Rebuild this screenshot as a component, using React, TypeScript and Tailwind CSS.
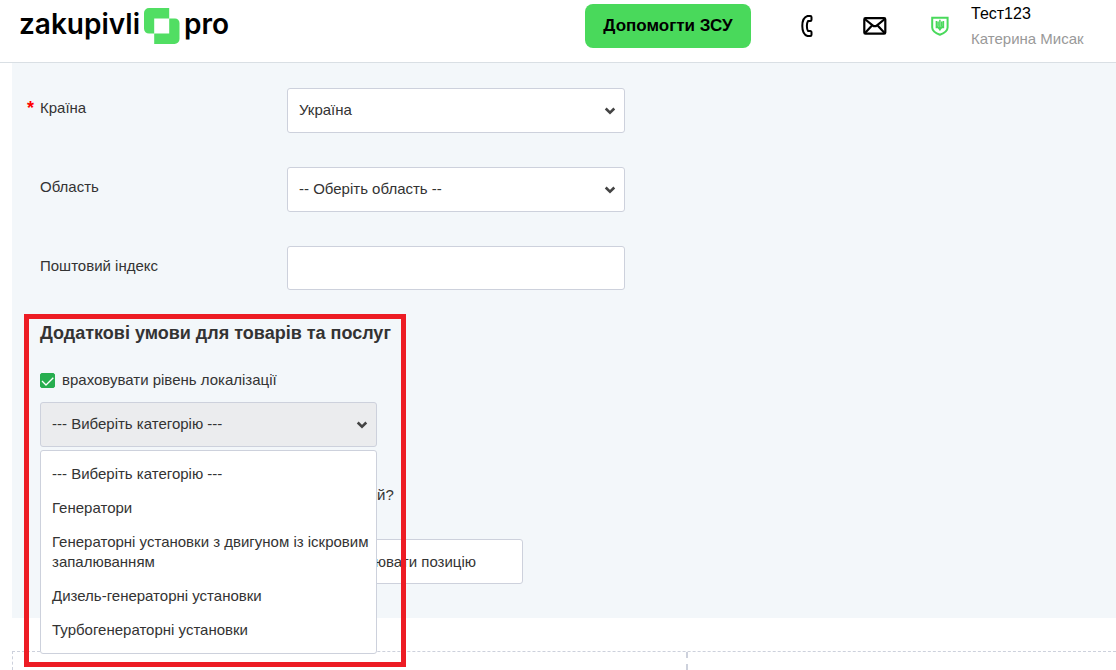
import { useState } from "react";
import type { ReactNode } from "react";

const categories = [
  "--- Виберіть категорію ---",
  "Генератори",
  "Генераторні установки з двигуном із іскровим запалюванням",
  "Дизель-генераторні установки",
  "Турбогенераторні установки",
];

const fieldClass =
  "block w-full appearance-none rounded-[3px] border border-[#cdd1dc] px-[11px] pb-0.5 outline-none";

function Logo() {
  return (
    <a
      href="#"
      aria-label="zakupivli pro"
      className="flex items-center gap-1 font-[Inter,sans-serif] text-[28px] leading-9 font-semibold text-black"
    >
      <span className="-mt-1">zakupivli</span>
      <svg width="36" height="36" viewBox="0 0 36 36" aria-hidden="true">
        <path d="M5 0H25.2V10.4H10.2V25.6H5a5 5 0 0 1-5-5V5a5 5 0 0 1 5-5z" fill="#51de63" />
        <path d="M25.2 10.4H31a4.5 4.5 0 0 1 4.5 4.5V31a5 5 0 0 1-5 5H10.2V25.6H25.2z" fill="#51de63" />
      </svg>
      <span className="-mt-1">pro</span>
    </a>
  );
}

function PhoneIcon() {
  return (
    <svg width="24" height="24" viewBox="0 0 24 24" fill="none" stroke="#000" strokeWidth="2" strokeLinejoin="round" aria-hidden="true">
      <path d="M12.500 2h2.800a1.200 1.200 0 0 1 1.200 1.200v2.600a1.200 1.200 0 0 1-1.200 1.200H13c-1.500 2.500-1.500 7.500 0 10h2.300a1.200 1.200 0 0 1 1.200 1.200v2.600a1.200 1.200 0 0 1-1.200 1.200h-2.800C9.300 21 7.300 17 7.300 12S9.300 3 12.500 2z" />
    </svg>
  );
}

function MailIcon() {
  return (
    <svg width="24" height="24" viewBox="0 0 24 24" fill="none" stroke="#000" strokeWidth="2.200" strokeLinejoin="round" aria-hidden="true">
      <rect x="1.300" y="4.200" width="21" height="15.400" rx="1.200" />
      <path d="M1.800 5l7.800 6.300a3.400 3.400 0 0 0 4.400 0L21.800 5M2 19l7-7.500M21.600 19l-7-7.500" />
    </svg>
  );
}

function ShieldIcon() {
  return (
    <svg width="18" height="20" viewBox="0 0 18 20" fill="none" stroke="#49d95b" aria-hidden="true">
      <path d="M1.200 1.800h15.400v9.700c0 3.500-3.300 5.600-7.700 7.300C4.500 17.100 1.200 15 1.200 11.500z" strokeWidth="2" />
      <path d="M8.900 3.800v10.600M5.400 5v6.600h7V5M7.100 5.500v4.300c0 1-.5 1.500-1.500 1.800M10.700 5.500v4.300c0 1 .5 1.500 1.500 1.800M7.100 11.600l1.800 2 1.800-2" strokeWidth="1.500" />
    </svg>
  );
}

function Chevron() {
  return (
    <svg
      className="pointer-events-none absolute top-1/2 right-[9px] -mt-1"
      width="12"
      height="8"
      viewBox="0 0 12 8"
      fill="none"
      stroke="#444"
      strokeWidth="2.600"
      aria-hidden="true"
    >
      <path d="M1.700 1.500L6 5.600l4.300-4.100" />
    </svg>
  );
}

function FormRow({ id, label, required, children }: { id: string; label: string; required?: boolean; children: ReactNode }) {
  return (
    <div className="flex items-start">
      <label htmlFor={id} className="relative w-[247px] shrink-0 pt-2.5">
        {required && <span className="absolute -left-[13px] text-lg leading-5 font-bold text-[#f00]">*</span>}
        {label}
      </label>
      <div className="relative w-full max-w-[338px]">{children}</div>
    </div>
  );
}

export default function App() {
  const [category, setCategory] = useState(categories[0]);
  const [localization, setLocalization] = useState(true);

  return (
    <div className="flex h-screen flex-col overflow-hidden bg-white font-['Liberation_Sans',Arial,sans-serif] text-[15px] leading-5 text-[#333]">
      <header className="flex shrink-0 items-center justify-between border-b border-[#d9dfe4] pt-1 pr-[33px] pb-3.5 pl-[19px]">
        <Logo />
        <div className="flex h-11 items-center gap-11">
          <button type="button" className="h-11 w-[166px] rounded-lg bg-[#49d95b] text-[17px] font-bold whitespace-nowrap text-black">
            Допомогти ЗСУ
          </button>
          <a href="#phone" aria-label="Телефон"><PhoneIcon /></a>
          <a href="#mail" aria-label="Пошта"><MailIcon /></a>
          <a href="#profile" className="flex items-center gap-[22px]">
            <ShieldIcon />
            <span className="w-28 leading-[25px] whitespace-nowrap">
              <span className="block text-base leading-[25px] text-black">Тест123</span>
              <span className="block text-[15px] leading-[25px] text-[#999]">Катерина Мисак</span>
            </span>
          </a>
        </div>
      </header>

      <main className="flex flex-1 flex-col pl-3">
        <form className="bg-[#f3f7fa] pt-[25px] pb-[34px] pl-7">
          <div className="flex flex-col gap-[34px]">
            <FormRow id="country" label="Країна" required>
              <select id="country" className={`${fieldClass} h-[45px] bg-white`}>
                <option>Україна</option>
              </select>
              <Chevron />
            </FormRow>
            <FormRow id="region" label="Область">
              <select id="region" className={`${fieldClass} h-[45px] bg-white`}>
                <option>-- Оберіть область --</option>
              </select>
              <Chevron />
            </FormRow>
            <FormRow id="postcode" label="Поштовий індекс">
              <input id="postcode" type="text" className={`${fieldClass} h-11 bg-white`} />
            </FormRow>
          </div>

          <section className="relative mt-[31px]">
            <h2 className="text-lg leading-6 font-bold">Додаткові умови для товарів та послуг</h2>

            <label className="mt-[25px] flex items-center gap-[7px]">
              <span className="relative size-[15px]">
                <input
                  type="checkbox"
                  checked={localization}
                  onChange={(e) => setLocalization(e.target.checked)}
                  className="peer block size-[15px] appearance-none rounded-[2px] border border-[#cdd1dc] bg-white checked:border-[#27ae4f] checked:bg-[#27ae4f]"
                />
                <svg className="pointer-events-none absolute inset-0 hidden peer-checked:block" width="15" height="15" viewBox="0 0 15 15" fill="none" stroke="#fff" strokeWidth="1.300" aria-hidden="true">
                  <path d="M2 8l4 4 7.300-7.300" />
                </svg>
              </span>
              враховувати рівень локалізації
            </label>

            <div className="relative mt-3 w-full max-w-[337px]">
              <select
                aria-label="Категорія"
                value={category}
                onChange={(e) => setCategory(e.target.value)}
                className={`${fieldClass} h-[45px] bg-[#ebecee]`}
              >
                {categories.map((c) => (
                  <option key={c}>{c}</option>
                ))}
              </select>
              <Chevron />
              <ul role="listbox" aria-label="Категорія" className="absolute top-full z-10 mt-[3px] w-full rounded-[3px] border border-[#cdd1dc] bg-white py-1.5">
                {categories.map((c) => (
                  <li
                    key={c}
                    role="option"
                    aria-selected={c === category}
                    onClick={() => setCategory(c)}
                    className="cursor-pointer py-[7px] pr-1 pl-[11px]"
                  >
                    {c}
                  </li>
                ))}
              </ul>
            </div>

            <p className="mt-[38px] pl-[337px]">й?</p>
            <button type="button" className="mt-[34px] block h-[45px] w-full max-w-[483px] rounded-[3px] border border-[#cdd1dc] bg-white pr-[46px] text-right">
              ювати позицію
            </button>

            <div className="pointer-events-none absolute -top-[7px] -left-4 z-20 h-[353px] w-[382px] border-[5px] border-[#ed1c24]" />
          </section>
        </form>

        <div className="mt-[33px] flex flex-1 border-t border-l border-dashed border-[#cdd1dc]">
          <div className="w-[61%]" />
          <div className="flex-1 border-l-2 border-dashed border-[#cdd1dc]" />
        </div>
      </main>
    </div>
  );
}
